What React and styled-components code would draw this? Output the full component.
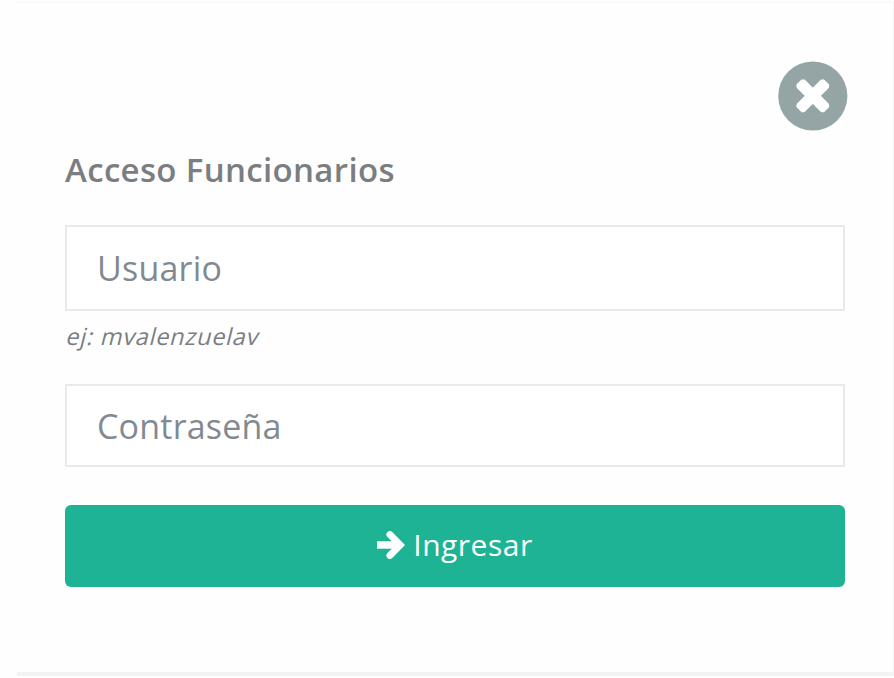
import React from "react";
import styled, { createGlobalStyle } from "styled-components";

const COLOR = {
  GREEN: "#1eb394",
  GRAY: "#95a5a6",
  TEXT: "#7b7e80",
  PLACEHOLDER: "#828a91",
  BORDER: "#e8e9e9",
};

const App = () => {
  return (
    <>
      <GlobalStyle />
      <Modal>
        <Header>
          <CloseButton type="button" aria-label="Cerrar">
            <CloseIcon viewBox="0 0 70 70">
              <circle cx="34.8" cy="35" r="34.6" />
              <path d="M22.4 22.4L47.2 47.2M47.2 22.4L22.4 47.2" />
              <path d="M24.5 20.3L20.3 24.5M45.1 20.3L49.3 24.5M20.3 45.1L24.5 49.3M49.3 45.1L45.1 49.3" />
            </CloseIcon>
          </CloseButton>
        </Header>
        <Title>Acceso Funcionarios</Title>
        <Form onSubmit={(e) => e.preventDefault()}>
          <Input type="text" placeholder="Usuario" $height={86} />
          <Hint>ej: mvalenzuelav</Hint>
          <Input type="password" placeholder="Contraseña" $height={83} />
          <SubmitButton type="submit">
            <ArrowIcon viewBox="0 0 28 30">
              <path d="M0 15H22" strokeWidth="7.4" />
              <path
                d="M13 4.6L23.2 15L13 25.4"
                strokeWidth="7"
                strokeLinejoin="miter"
              />
            </ArrowIcon>
            <ButtonText>Ingresar</ButtonText>
          </SubmitButton>
        </Form>
      </Modal>
    </>
  );
};
export default App;

const GlobalStyle = createGlobalStyle`
  * {
    box-sizing: border-box;
  }
  body {
    margin: 0;
    background-color: #fefefe;
    font-family: "Open Sans", "Noto Sans", sans-serif;
    color: ${COLOR.TEXT};
  }
`;

const Modal = styled.main`
  width: 877px;
  height: 675px;
  margin: 1px 0 0 17px;
  padding: 59px 48px 0;
  border-top: 2px solid #fafafa;
  border-right: 1px solid #f5f5f5;
  border-bottom: 4px solid #f3f3f3;
`;

const Header = styled.header`
  display: flex;
  justify-content: flex-end;
  height: 70px;
  margin: -1px -3px 0 0;
`;

const CloseButton = styled.button`
  width: 70px;
  height: 70px;
  padding: 0;
  border: none;
  background: none;
`;

const CloseIcon = styled.svg`
  display: block;
  width: 70px;
  height: 70px;
  fill: ${COLOR.GRAY};
  path {
    stroke: #ffffff;
    stroke-width: 11.4;
  }
  /* rounded tips of the cross */
  path + path {
    stroke-width: 4;
    stroke-linecap: round;
  }
`;

const Title = styled.h1`
  margin: 17px 0 0;
  height: 77px;
  font-size: 33px;
  font-weight: 600;
  line-height: 43px;
  letter-spacing: 0.34px;
`;

const Form = styled.form`
  display: flex;
  flex-direction: column;
`;

const Input = styled.input`
  height: ${({ $height }) => $height}px;
  padding: 0 30px;
  border: 2px solid ${COLOR.BORDER};
  border-radius: 1px;
  background-color: #ffffff;
  font-family: inherit;
  font-size: 34px;
  letter-spacing: 0.2px;
  &::placeholder {
    color: ${COLOR.PLACEHOLDER};
    opacity: 1;
  }
`;

const Hint = styled.small`
  align-self: flex-start;
  height: 73px;
  padding-top: 9px;
  font-size: 23.5px;
  line-height: 32px;
  letter-spacing: 0.75px;
  transform: skewX(-14deg);
  transform-origin: 0 34px;
`;

const SubmitButton = styled.button`
  display: flex;
  align-items: center;
  justify-content: center;
  gap: 8px;
  height: 82px;
  margin-top: 38px;
  padding: 0 0 3px;
  border: none;
  border-radius: 6px;
  background-color: ${COLOR.GREEN};
  color: #ffffff;
  font-family: inherit;
`;

const ArrowIcon = styled.svg`
  width: 28px;
  height: 30px;
  fill: none;
  stroke: currentColor;
  stroke-linecap: round;
  path:first-child {
    stroke-linecap: butt;
  }
`;

const ButtonText = styled.span`
  font-size: 30px;
  font-weight: 500;
  letter-spacing: 0.5px;
`;
